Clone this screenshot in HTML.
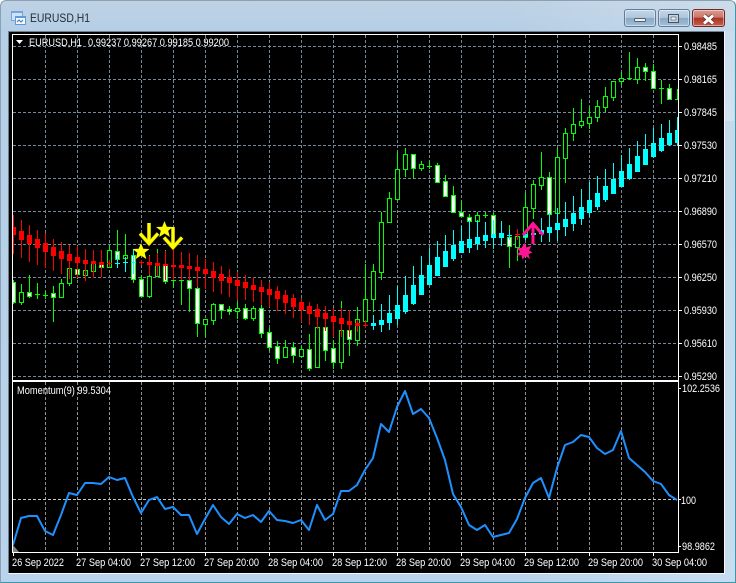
<!DOCTYPE html>
<html>
<head>
<meta charset="utf-8">
<title>EURUSD,H1</title>
<style>
html,body{margin:0;padding:0;background:#fff;}
body{width:736px;height:583px;position:relative;overflow:hidden;font-family:"Liberation Sans",sans-serif;}
#win{position:absolute;left:0;top:0;width:734px;height:581px;border:1px solid #3a98a8;border-top-color:#8aa0b4;border-left-color:#8aa0b4;border-radius:6px 6px 0 0;background:linear-gradient(90deg,rgba(255,255,255,0) 70%,rgba(255,255,255,.22) 100%),linear-gradient(#bfd2e4 0,#b5cfe6 30px,#b9d3ec 100%);}
#rt{position:absolute;left:725px;top:31px;width:9px;height:90px;background:linear-gradient(#c9dcee,#d2e2f0);}
.btn{position:absolute;top:9px;height:16px;border:1px solid #5f7c98;border-radius:3px;box-shadow:inset 0 0 0 1px rgba(255,255,255,.45);background:linear-gradient(#c3d6e8 0,#aec6dc 48%,#8aa9c5 52%,#a3bfd8 100%);}
svg{position:absolute;left:0;top:0;}
text{font-family:"Liberation Sans",sans-serif;font-size:11px;fill:#fff;}
</style>
</head>
<body>
<div id="win"></div>
<div id="rt"></div>
<div class="btn" style="left:624px;width:30px"></div>
<div class="btn" style="left:658px;width:30px"></div>
<div class="btn" style="left:692px;width:31px;border-color:#6b2a28;background:linear-gradient(#dc9c90 0,#c9776a 45%,#ad3226 52%,#c65f4b 100%)"></div>
<svg width="736" height="583" viewBox="0 0 736 583" xmlns="http://www.w3.org/2000/svg">
<defs>
<clipPath id="m"><rect x="13" y="35" width="665" height="345"/></clipPath>
<clipPath id="l"><rect x="13" y="382" width="665" height="170"/></clipPath>
</defs>
<!-- title -->
<g shape-rendering="crispEdges">
<rect x="11" y="11" width="12" height="10" fill="#6fa6e0"/><rect x="12" y="13" width="10" height="7" fill="#cfe2f6"/>
<rect x="15" y="16" width="11" height="9" fill="#5f9ad8"/><rect x="16" y="18" width="9" height="6" fill="#f2f7fc"/>
</g>
<path d="M17 22l2-2 2 2 2-2" fill="none" stroke="#3b78b8"/>
<text x="30" y="22" textLength="60" lengthAdjust="spacingAndGlyphs" style="font-size:12px;fill:#1f2a33">EURUSD,H1</text>
<!-- buttons -->
<rect x="634.500" y="18.500" width="11" height="3" rx="1" fill="#eef2f6" stroke="#53626f"/>
<rect x="668.5" y="14.5" width="10" height="8" fill="#c6d5e2" stroke="#44525f"/><rect x="671" y="17" width="5" height="3" fill="#eef3f7" stroke="#44525f" stroke-width=".6"/>
<path d="M704 15.5l9 8M713 15.5l-9 8" stroke="#5a2a26" stroke-width="4.4"/>
<path d="M704 15.5l9 8M713 15.5l-9 8" stroke="#fff" stroke-width="3"/>
<!-- client -->
<g shape-rendering="crispEdges">
<rect x="8" y="31" width="717" height="543" fill="#000"/>
<path d="M8.5 31V574M8 31.5H725" stroke="#6f7f8e" fill="none"/>
<path d="M8 573.5H725M724.5 31V574" stroke="#f4f8fb" fill="none"/>
<!-- main grid -->
<path d="M13 46.5H678M13 79.5H678M13 112.5H678M13 145.5H678M13 178.5H678M13 211.5H678M13 244.5H678M13 277.5H678M13 310.5H678M13 343.5H678M13 376.5H678" stroke="#778899" stroke-dasharray="3 2" fill="none"/>
<path d="M45.5 35V380M77.5 35V380M109.5 35V380M141.5 35V380M173.5 35V380M205.5 35V380M237.5 35V380M269.5 35V380M301.5 35V380M333.5 35V380M365.5 35V380M397.5 35V380M429.5 35V380M461.5 35V380M493.5 35V380M525.5 35V380M557.5 35V380M589.5 35V380M621.5 35V380M653.5 35V380" stroke="#778899" stroke-dasharray="3 2" fill="none"/>
<!-- lower grid -->
<path d="M45.5 382V552M77.5 382V552M109.5 382V552M141.5 382V552M173.5 382V552M205.5 382V552M237.5 382V552M269.5 382V552M301.5 382V552M333.5 382V552M365.5 382V552M397.5 382V552M429.5 382V552M461.5 382V552M493.5 382V552M525.5 382V552M557.5 382V552M589.5 382V552M621.5 382V552M653.5 382V552" stroke="#909090" stroke-dasharray="3 2" fill="none"/>
<path d="M13 499.5H678" stroke="#c8c8c8" stroke-dasharray="3 2" fill="none"/>
<g clip-path="url(#m)">
<!-- green wicks -->
<path stroke="#0f0" fill="none" d="M13.5 280V304M21.5 284V305M29.5 275V298M37.5 283V299M45.5 291V299M53.5 286V322M61.5 279V297M69.5 268V286M77.5 269V279M85.5 270V281M93.5 260V271M101.5 262V267M109.5 245V267M117.5 230V267M125.5 234V258M133.5 255V283M141.5 275V296M149.5 255V298M157.5 249V276M165.5 250V284M173.5 280V288M181.5 280V305M189.5 280V312M197.5 287V337M205.5 319V337M213.5 303V325M221.5 304V319M229.5 306V315M237.5 302V319M245.5 304V320M253.5 306V321M261.5 304V338M269.5 328V351M277.5 341V364M285.5 340V358M293.5 342V363M301.5 346V356M309.5 334V371M317.5 327V367M325.5 322V361M333.5 340V369M341.5 301V369M349.5 310V356M357.5 307V346M365.5 264V321M373.5 264V312M381.5 212V280M389.5 192V223M397.5 152V199M405.5 148V177M413.5 154V179M421.5 161V171M429.5 161V169M437.5 163V182M445.5 175V197M453.5 186V212M461.5 201V216M469.5 214V221M477.5 212V221M485.5 212V218M493.5 213V249M509.5 225V268M517.5 236V261M525.5 193V237M533.5 180V219M541.5 152V190M549.5 172V214M557.5 148V213M565.5 128V183M573.5 108V141M581.5 99V128M589.5 107V129M597.5 100V122M605.5 87V112M613.5 81V101M621.5 72V85M629.5 52V80M637.5 58V84M645.5 63V81M653.5 64V88M661.5 80V104M669.5 84V100M677.5 89V100"/>
<!-- green dojis -->
<path stroke="#0f0" fill="none" d="M35 294.5h5M43 295.5h5M171 280.5h5M179 280.5h5M427 166.5h5M483 215.5h5M627 78.5h5M659 88.5h5M675 99.5h5"/>
<!-- hollow -->
<path stroke="#0f0" fill="#000" d="M19.5 292.5h4V302.5h-4zM59.5 283.5h4V297.5h-4zM67.5 268.5h4V283.5h-4zM83.5 270.5h4V275.5h-4zM91.5 263.5h4V271.5h-4zM107.5 250.5h4V267.5h-4zM123.5 255.5h4V258.5h-4zM147.5 276.5h4V296.5h-4zM155.5 265.5h4V276.5h-4zM203.5 319.5h4V324.5h-4zM211.5 304.5h4V320.5h-4zM235.5 308.5h4V311.5h-4zM251.5 308.5h4V318.5h-4zM283.5 347.5h4V357.5h-4zM299.5 349.5h4V356.5h-4zM315.5 327.5h4V367.5h-4zM339.5 330.5h4V362.5h-4zM355.5 319.5h4V340.5h-4zM363.5 299.5h4V321.5h-4zM371.5 271.5h4V299.5h-4zM379.5 222.5h4V272.5h-4zM387.5 198.5h4V222.5h-4zM395.5 169.5h4V199.5h-4zM403.5 154.5h4V169.5h-4zM419.5 164.5h4V168.5h-4zM475.5 215.5h4V221.5h-4zM515.5 236.5h4V247.5h-4zM523.5 207.5h4V237.5h-4zM531.5 184.5h4V208.5h-4zM539.5 177.5h4V185.5h-4zM555.5 157.5h4V213.5h-4zM563.5 133.5h4V158.5h-4zM571.5 124.5h4V133.5h-4zM579.5 121.5h4V125.5h-4zM587.5 117.5h4V123.5h-4zM595.5 106.5h4V117.5h-4zM603.5 96.5h4V107.5h-4zM611.5 81.5h4V97.5h-4zM619.5 78.5h4V81.5h-4zM635.5 67.5h4V79.5h-4z"/>
<!-- white -->
<path stroke="#0f0" fill="#fff" d="M11.5 282.5h4V302.5h-4zM27.5 292.5h4V296.5h-4zM51.5 293.5h4V297.5h-4zM75.5 269.5h4V274.5h-4zM99.5 262.5h4V267.5h-4zM115.5 251.5h4V259.5h-4zM131.5 255.5h4V279.5h-4zM139.5 279.5h4V296.5h-4zM163.5 264.5h4V281.5h-4zM187.5 280.5h4V288.5h-4zM195.5 288.5h4V323.5h-4zM219.5 304.5h4V310.5h-4zM227.5 309.5h4V311.5h-4zM243.5 308.5h4V318.5h-4zM259.5 308.5h4V333.5h-4zM267.5 332.5h4V347.5h-4zM275.5 346.5h4V358.5h-4zM291.5 347.5h4V355.5h-4zM307.5 349.5h4V368.5h-4zM323.5 327.5h4V350.5h-4zM331.5 348.5h4V362.5h-4zM347.5 330.5h4V339.5h-4zM411.5 154.5h4V168.5h-4zM435.5 165.5h4V182.5h-4zM443.5 181.5h4V196.5h-4zM451.5 195.5h4V212.5h-4zM459.5 212.5h4V216.5h-4zM467.5 217.5h4V221.5h-4zM491.5 215.5h4V234.5h-4zM507.5 237.5h4V246.5h-4zM547.5 177.5h4V214.5h-4zM643.5 67.5h4V71.5h-4zM651.5 71.5h4V88.5h-4zM667.5 88.5h4V99.5h-4z"/>
<!-- red -->
<path stroke="#f00" fill="none" d="M13.5 215V254M21.5 220V258M29.5 225V262M37.5 230V265M45.5 233V268M53.5 239V271M61.5 242V274M69.5 245V279M77.5 246V278M85.5 249V281M93.5 250V278M101.5 250V277M109.5 260V267M141.5 260V265M149.5 256V275M157.5 253V276M165.5 251V280M173.5 250V280M181.5 252V280M189.5 253V280M197.5 255V287M205.5 259V289M213.5 262V292M221.5 266V294M229.5 269V297M237.5 272V300M245.5 275V300M253.5 277V302M261.5 280V305M269.5 282V307M277.5 286V311M285.5 290V314M293.5 294V318M301.5 298V322M309.5 302V325M317.5 304V329M325.5 306V331M333.5 308V337M341.5 308V337M349.5 310V337M357.5 320V332M365.5 320V328M517.5 229V240M107 263.5h5M139 262.5h5M363 325.5h5M515 234.5h5"/>
<path fill="#f00" d="M11 227h5V235h-5zM19 231h5V240h-5zM27 235h5V244h-5zM35 239h5V248h-5zM43 243h5V252h-5zM51 247h5V256h-5zM59 251h5V259h-5zM67 254h5V261h-5zM75 257h5V263h-5zM83 260h5V264h-5zM91 261h5V264h-5zM99 262h5V265h-5zM147 262h5V265h-5zM155 263h5V266h-5zM163 264h5V266h-5zM171 265h5V267h-5zM179 265h5V268h-5zM187 266h5V269h-5zM195 267h5V271h-5zM203 269h5V274h-5zM211 271h5V278h-5zM219 274h5V281h-5zM227 277h5V283h-5zM235 280h5V286h-5zM243 282h5V288h-5zM251 285h5V290h-5zM259 287h5V292h-5zM267 289h5V295h-5zM275 291h5V299h-5zM283 295h5V303h-5zM291 298h5V307h-5zM299 302h5V310h-5zM307 306h5V314h-5zM315 309h5V317h-5zM323 313h5V319h-5zM331 316h5V322h-5zM339 318h5V324h-5zM347 321h5V325h-5zM355 323h5V326h-5z"/>
<!-- cyan -->
<path stroke="#0ff" fill="none" d="M117.5 255V268M125.5 257V272M133.5 249V274M373.5 315V330M381.5 304V332M389.5 295V330M397.5 286V325M405.5 276V314M413.5 266V305M421.5 256V295M429.5 248V285M437.5 241V276M445.5 235V267M453.5 230V261M461.5 226V253M469.5 220V253M477.5 220V250M485.5 222V248M493.5 220V248M501.5 221V246M509.5 230V240M525.5 232V240M533.5 228V236M541.5 218V242M549.5 213V242M557.5 208V241M565.5 202V236M573.5 196V231M581.5 189V225M589.5 182V217M597.5 176V210M605.5 169V202M613.5 163V194M621.5 155V187M629.5 148V180M637.5 141V172M645.5 134V165M653.5 128V158M661.5 124V152M669.5 120V146M677.5 117V146M115 263.5h5M123 262.5h5M131 262.5h5M507 235.5h5"/>
<path fill="#0ff" d="M371 323h5V326h-5zM379 320h5V325h-5zM387 313h5V323h-5zM395 305h5V319h-5zM403 295h5V312h-5zM411 285h5V304h-5zM419 275h5V295h-5zM427 265h5V285h-5zM435 257h5V276h-5zM443 251h5V267h-5zM451 245h5V259h-5zM459 241h5V253h-5zM467 239h5V248h-5zM475 237h5V244h-5zM483 235h5V241h-5zM491 234h5V238h-5zM499 233h5V238h-5zM523 234h5V237h-5zM531 233h5V235h-5zM539 230h5V234h-5zM547 227h5V233h-5zM555 223h5V230h-5zM563 219h5V227h-5zM571 213h5V224h-5zM579 207h5V219h-5zM587 200h5V213h-5zM595 193h5V207h-5zM603 186h5V200h-5zM611 179h5V194h-5zM619 171h5V187h-5zM627 164h5V179h-5zM635 156h5V172h-5zM643 149h5V165h-5zM651 143h5V157h-5zM659 138h5V151h-5zM667 133h5V145h-5zM675 130h5V143h-5z"/>
</g>
<!-- frames -->
<path d="M12.5 34.5H678.5V380.5H12.5Z M12.5 381.5H678.5V552.5H12.5Z" fill="none" stroke="#fff"/>
<!-- ticks -->
<path stroke="#fff" fill="none" d="M678 46.5h4M678 79.5h4M678 112.5h4M678 145.5h4M678 178.5h4M678 211.5h4M678 244.5h4M678 277.5h4M678 310.5h4M678 343.5h4M678 376.5h4M678 388.5h3M678 499.5h3M678 546.5h3M13.5 552V556M77.5 552V556M141.5 552V556M205.5 552V556M269.5 552V556M333.5 552V556M397.5 552V556M461.5 552V556M525.5 552V556M589.5 552V556M653.5 552V556"/>
</g>
<!-- arrows / stars -->
<g fill="none" stroke="#8a7a00" stroke-width="4" stroke-linecap="butt">
<path d="M149 223V244M140 233.5l9 10 9-10"/>
<path d="M173 227V247M164 237.5l9 10 9-10"/>
</g>
<g fill="none" stroke="#ffff00" stroke-width="3" stroke-linecap="butt">
<path d="M149 223V244M140 233.5l9 10 9-10"/>
<path d="M173 227V247M164 237.5l9 10 9-10"/>
</g>
<polygon fill="#ffff00" points="141,243 143.300,248.700 149.500,249 144.700,252.800 146.300,259 141,255.500 135.700,259 137.300,252.800 132.500,249 138.700,248.700"/>
<polygon fill="#ffff00" points="164.500,221 166.800,226.700 173,227 168.200,230.800 169.800,237 164.500,233.500 159.200,237 160.800,230.800 156,227 162.200,226.700"/>
<path d="M533 244V226M523 235l10-11.500 10 11.500" fill="none" stroke="#ff1493" stroke-width="3"/>
<polygon fill="#ff1493" points="524.500,243 526.500,247.500 531.500,245.500 529,250.500 532.500,252.500 528.500,254 530,259 525.500,256 522.500,259.500 521.500,255 516.500,255.500 520,251.500 516.500,247.500 521.500,248"/>
<!-- momentum -->
<g clip-path="url(#l)">
<polygon points="13,545 13,552 19,552" fill="#808080"/>
<polyline fill="none" stroke="#1e90ff" stroke-width="2" stroke-linejoin="round" points="13,545 21,518 29,516 37,516 45,531 53,535 61,515 69,493 77,495 85,483 93,483 101,484 109,477 117,480 125,478 133,497 141,513 149,500 157,497 165,509 173,507 181,515 189,515 197,534 205,519 213,505 221,517 229,524 237,514 245,518 253,515 261,522 269,511 277,520 285,521 293,523 301,520 309,530 317,505 325,520 333,514 341,491 349,491 357,485 365,470 373,458 381,424 389,432 397,407 405,391 413,414 421,409 429,418 437,438 445,460 453,494 461,507 469,525 477,530 485,525 493,537 501,535 509,533 517,519 525,498 533,483 541,478 549,498 557,468 565,445 573,442 581,435 589,437 597,448 605,454 613,450 621,431 629,458 637,465 645,472 653,481 661,484 669,495 677,500"/>
</g>
<!-- labels -->
<polygon points="16,40 23,40 19.500,44" fill="#fff"/>
<text x="29" y="46" textLength="53" lengthAdjust="spacingAndGlyphs">EURUSD,H1</text>
<text x="88" y="46" textLength="141" lengthAdjust="spacingAndGlyphs">0.99237 0.99267 0.99185 0.99200</text>
<text x="17" y="394" textLength="94" lengthAdjust="spacingAndGlyphs">Momentum(9) 99.5304</text>
<g>
<text x="684" y="50" textLength="33" lengthAdjust="spacingAndGlyphs">0.98485</text>
<text x="684" y="83" textLength="33" lengthAdjust="spacingAndGlyphs">0.98165</text>
<text x="684" y="116" textLength="33" lengthAdjust="spacingAndGlyphs">0.97845</text>
<text x="684" y="149" textLength="33" lengthAdjust="spacingAndGlyphs">0.97530</text>
<text x="684" y="182" textLength="33" lengthAdjust="spacingAndGlyphs">0.97210</text>
<text x="684" y="215" textLength="33" lengthAdjust="spacingAndGlyphs">0.96890</text>
<text x="684" y="248" textLength="33" lengthAdjust="spacingAndGlyphs">0.96570</text>
<text x="684" y="281" textLength="33" lengthAdjust="spacingAndGlyphs">0.96250</text>
<text x="684" y="314" textLength="33" lengthAdjust="spacingAndGlyphs">0.95930</text>
<text x="684" y="347" textLength="33" lengthAdjust="spacingAndGlyphs">0.95610</text>
<text x="684" y="380" textLength="33" lengthAdjust="spacingAndGlyphs">0.95290</text>
<text x="682" y="392" textLength="38" lengthAdjust="spacingAndGlyphs">102.2536</text>
<text x="681" y="504" textLength="15" lengthAdjust="spacingAndGlyphs">100</text>
<text x="682" y="550" textLength="33" lengthAdjust="spacingAndGlyphs">98.9862</text>
</g>
<g>
<text x="12" y="566" textLength="52" lengthAdjust="spacingAndGlyphs">26 Sep 2022</text>
<text x="76" y="566" textLength="55" lengthAdjust="spacingAndGlyphs">27 Sep 04:00</text>
<text x="140" y="566" textLength="55" lengthAdjust="spacingAndGlyphs">27 Sep 12:00</text>
<text x="204" y="566" textLength="55" lengthAdjust="spacingAndGlyphs">27 Sep 20:00</text>
<text x="268" y="566" textLength="55" lengthAdjust="spacingAndGlyphs">28 Sep 04:00</text>
<text x="332" y="566" textLength="55" lengthAdjust="spacingAndGlyphs">28 Sep 12:00</text>
<text x="396" y="566" textLength="55" lengthAdjust="spacingAndGlyphs">28 Sep 20:00</text>
<text x="460" y="566" textLength="55" lengthAdjust="spacingAndGlyphs">29 Sep 04:00</text>
<text x="524" y="566" textLength="55" lengthAdjust="spacingAndGlyphs">29 Sep 12:00</text>
<text x="588" y="566" textLength="55" lengthAdjust="spacingAndGlyphs">29 Sep 20:00</text>
<text x="652" y="566" textLength="55" lengthAdjust="spacingAndGlyphs">30 Sep 04:00</text>
</g>
</svg>
</body>
</html>
